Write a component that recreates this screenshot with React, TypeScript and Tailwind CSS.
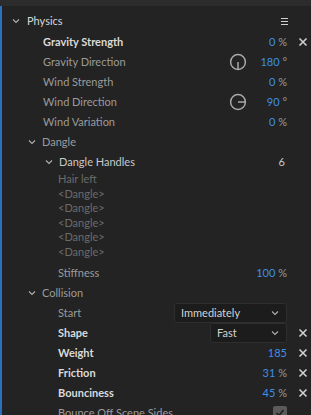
import React from "react";

function Chevron() {
  return (
    <svg width="8" height="8" viewBox="0 0 8 8">
      <path d="M1 2.5 L4 5.5 L7 2.5" fill="none" stroke="#b0b0b0" strokeWidth="1.1" />
    </svg>
  );
}

function CloseX() {
  return (
    <svg width="10" height="10" viewBox="0 0 10 10">
      <path d="M1.5 1.5 L8.5 8.5 M8.5 1.5 L1.5 8.5" stroke="#d0d0d0" strokeWidth="1.6" />
    </svg>
  );
}

function Dial({ angle }: { angle: "down" | "right" }) {
  return (
    <svg width="18" height="18" viewBox="0 0 18 18">
      <circle cx="9" cy="9" r="7.4" fill="none" stroke="#a8a8a8" strokeWidth="1.5" />
      {angle === "down" ? (
        <path d="M9 9 L9 16.4" stroke="#a8a8a8" strokeWidth="1.5" />
      ) : (
        <path d="M9 9 L16.4 9" stroke="#a8a8a8" strokeWidth="1.5" />
      )}
    </svg>
  );
}

function Value({ n, unit }: { n: string; unit?: string }) {
  return (
    <span className="text-[11px]">
      <span className="text-[#3f8fe6]">{n}</span>
      {unit && <span className="text-[#9a9a9a]">{unit === "°" ? " °" : " %"}</span>}
    </span>
  );
}

function XCol({ show }: { show?: boolean }) {
  return <div className="flex w-[24px] justify-end pr-[3px]">{show && <CloseX />}</div>;
}

type RowProps = {
  label: string;
  indent: number;
  bright?: boolean;
  value?: React.ReactNode;
  dial?: "down" | "right";
  x?: boolean;
};

function Row({ label, indent, bright, value, dial, x }: RowProps) {
  return (
    <div className="flex h-[20px] items-center">
      <div
        className={`flex-1 truncate text-[11px] ${bright ? "text-[#dadada] font-bold" : "text-[#9b9b9b]"}`}
        style={{ paddingLeft: indent }}
      >
        {label}
      </div>
      {dial && (
        <div className="flex items-center">
          <Dial angle={dial} />
        </div>
      )}
      <div className={`flex justify-end ${dial ? "w-[40px]" : ""}`}>{value}</div>
      <XCol show={x} />
    </div>
  );
}

function Group({ label, indent }: { label: string; indent: number }) {
  return (
    <div className="flex h-[20px] items-center" style={{ paddingLeft: indent }}>
      <Chevron />
      <span className="ml-[6px] text-[11px] text-[#9b9b9b]">{label}</span>
    </div>
  );
}

function Select({ label, width }: { label: string; width: number }) {
  return (
    <div
      className="flex h-[20px] items-center justify-between rounded-[3px] border border-[#2e2e2e] bg-[#1c1c1c] pl-[6px] pr-[7px] text-[11px] text-[#d2d2d2]"
      style={{ width }}
    >
      <span>{label}</span>
      <Chevron />
    </div>
  );
}

export default function App() {
  const dangles = ["Hair left", "<Dangle>", "<Dangle>", "<Dangle>", "<Dangle>", "<Dangle>"];
  return (
    <div
      className="h-[415px] w-[311px] overflow-hidden bg-[#232323]"
      style={{ fontFamily: "Lato, 'Open Sans', sans-serif" }}
    >
      <div className="h-[6px] bg-[#2c2c2c]" />
      <div className="border-l-2 border-[#2d6fbf] pt-[5px]">
        <div className="flex h-[20px] items-center pl-[10px]">
          <Chevron />
          <span className="ml-[7px] flex-1 text-[11px] text-[#d8d8d8]">Physics</span>
          <div className="mr-[23px] flex flex-col gap-[2px]">
            <div className="h-[1px] w-[7px] bg-[#cfcfcf]" />
            <div className="h-[1px] w-[7px] bg-[#cfcfcf]" />
            <div className="h-[1px] w-[7px] bg-[#cfcfcf]" />
          </div>
        </div>
        <div className="h-[1px]" />
        <Row label="Gravity Strength" indent={41} bright value={<Value n="0" unit="%" />} x />
        <Row label="Gravity Direction" indent={41} value={<Value n="180" unit="°" />} dial="down" />
        <Row label="Wind Strength" indent={41} value={<Value n="0" unit="%" />} />
        <Row label="Wind Direction" indent={41} value={<Value n="90" unit="°" />} dial="right" />
        <Row label="Wind Variation" indent={41} value={<Value n="0" unit="%" />} />
        <Group label="Dangle" indent={26} />
        <div className="flex h-[20px] items-center pl-[43px]">
          <Chevron />
          <span className="ml-[6px] flex-1 text-[11px] text-[#c8c8c8]">Dangle Handles</span>
          <span className="mr-[26px] text-[11px] text-[#c8c8c8]">6</span>
        </div>
        <div className="flex flex-col pb-[4px] pl-[56px]">
          {dangles.map((d, i) => (
            <div key={i} className="h-[14.5px] text-[11px] leading-[14.5px] text-[#6b6b6b]">
              {d}
            </div>
          ))}
        </div>
        <Row label="Stiffness" indent={56} value={<Value n="100" unit="%" />} />
        <Group label="Collision" indent={26} />
        <div className="flex h-[20px] items-center">
          <div className="flex-1 pl-[56px] text-[11px] text-[#9b9b9b]">Start</div>
          <Select label="Immediately" width={113} />
          <XCol />
        </div>
        <div className="flex h-[20px] items-center">
          <div className="flex-1 pl-[56px] text-[11px] font-bold text-[#dadada]">Shape</div>
          <Select label="Fast" width={77} />
          <XCol show />
        </div>
        <Row label="Weight" indent={56} bright value={<Value n="185" />} x />
        <Row label="Friction" indent={56} bright value={<Value n="31" unit="%" />} x />
        <Row label="Bounciness" indent={56} bright value={<Value n="45" unit="%" />} x />
        <div className="flex h-[20px] items-center">
          <div className="flex-1 pl-[56px] text-[11px] text-[#9b9b9b]">Bounce Off Scene Sides</div>
          <div className="flex h-[14px] w-[14px] items-center justify-center rounded-[2px] bg-[#5a5a5a]">
            <svg width="10" height="10" viewBox="0 0 10 10">
              <path d="M1.5 5 L4 7.5 L8.5 2" fill="none" stroke="#1e1e1e" strokeWidth="1.6" />
            </svg>
          </div>
          <XCol />
        </div>
      </div>
    </div>
  );
}
